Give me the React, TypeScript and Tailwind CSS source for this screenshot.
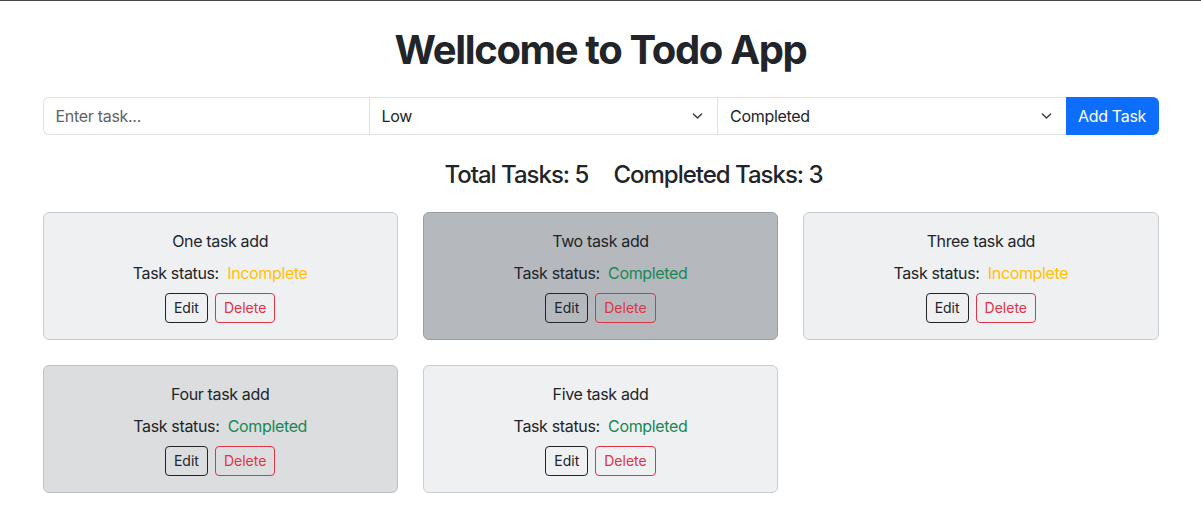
import React from 'react';

interface Task {
  title: string;
  done: boolean;
  tone: 'light' | 'dark' | 'mid';
}

const tasks: Task[] = [
  { title: 'One task add', done: false, tone: 'light' },
  { title: 'Two task add', done: true, tone: 'dark' },
  { title: 'Three task add', done: false, tone: 'light' },
  { title: 'Four task add', done: true, tone: 'mid' },
  { title: 'Five task add', done: true, tone: 'light' },
];

const toneClass = {
  light: 'bg-[#eff0f2] border-[#cacccf]',
  dark: 'bg-[#b5b9bd] border-[#9a9ea2]',
  mid: 'bg-[#dcdddf] border-[#bfc1c4]',
};

const Chevron = () => (
  <svg
    className="pointer-events-none absolute right-[14px] top-1/2 -translate-y-1/2"
    width="11"
    height="11"
    viewBox="0 0 16 16"
    fill="none"
    stroke="#343a40"
    strokeWidth="2"
    strokeLinecap="round"
    strokeLinejoin="round"
  >
    <path d="m2 5 6 6 6-6" />
  </svg>
);

const SelectBox = ({ value, options }: { value: string; options: string[] }) => (
  <div className="relative flex-1">
    <select
      defaultValue={value}
      className="h-[38px] w-full appearance-none border-y border-l border-[#dee2e6] bg-white pl-3 pr-9 text-base tracking-[-0.3px] text-[#212529] outline-none"
    >
      {options.map((o) => (
        <option key={o}>{o}</option>
      ))}
    </select>
    <Chevron />
  </div>
);

const TaskCard = ({ task }: { task: Task }) => (
  <div className={`flex h-[128px] flex-col items-center rounded-[6px] border pt-[16px] ${toneClass[task.tone]}`}>
    <p className="text-base leading-6 tracking-[-0.35px] text-[#212529]">{task.title}</p>
    <p className="mt-2 text-base leading-6 tracking-[-0.35px] text-[#212529]">
      Task status:&nbsp;{' '}
      <span className={task.done ? 'text-[#198754]' : 'text-[#ffc107]'}>
        {task.done ? 'Completed' : 'Incomplete'}
      </span>
    </p>
    <div className="mt-2 flex gap-[7px]">
      <button className="h-[30px] rounded-[4px] border border-[#212529] px-2 text-sm text-[#212529]">Edit</button>
      <button className="h-[30px] rounded-[4px] border border-[#dc3545] px-2 text-sm text-[#dc3545]">Delete</button>
    </div>
  </div>
);

export default function App() {
  return (
    <div className="min-h-[531px] border-t border-[#444] bg-white font-['Inter',sans-serif] text-[#212529]">
      <div className="mx-auto w-[1116px] pt-[25px]">
        <h1 className="text-center text-[40px] font-bold leading-[48px] tracking-[-1.35px]">Wellcome to Todo App</h1>

        <div className="mt-[23px] flex">
          <input
            placeholder="Enter task..."
            className="h-[38px] w-[326px] rounded-l-[6px] border-y border-l border-[#dee2e6] px-3 text-base tracking-[-0.3px] text-[#212529] outline-none placeholder:text-[#5f6266]"
          />
          <SelectBox value="Low" options={['Low', 'Medium', 'High']} />
          <SelectBox value="Completed" options={['Completed', 'Incomplete']} />
          <button className="h-[38px] w-[93px] rounded-r-[6px] bg-[#0d6efd] text-base tracking-[-0.3px] text-white">Add Task</button>
        </div>

        <div className="mt-[25px] flex justify-center gap-[25px] pl-[66px] text-[24px] font-medium leading-[29px] tracking-[-1px]">
          <span>Total Tasks: 5</span>
          <span>Completed Tasks: 3</span>
        </div>

        <div className="mt-[23px] grid grid-cols-3 gap-[25px]">
          {tasks.map((t) => (
            <TaskCard key={t.title} task={t} />
          ))}
        </div>
      </div>
    </div>
  );
}
